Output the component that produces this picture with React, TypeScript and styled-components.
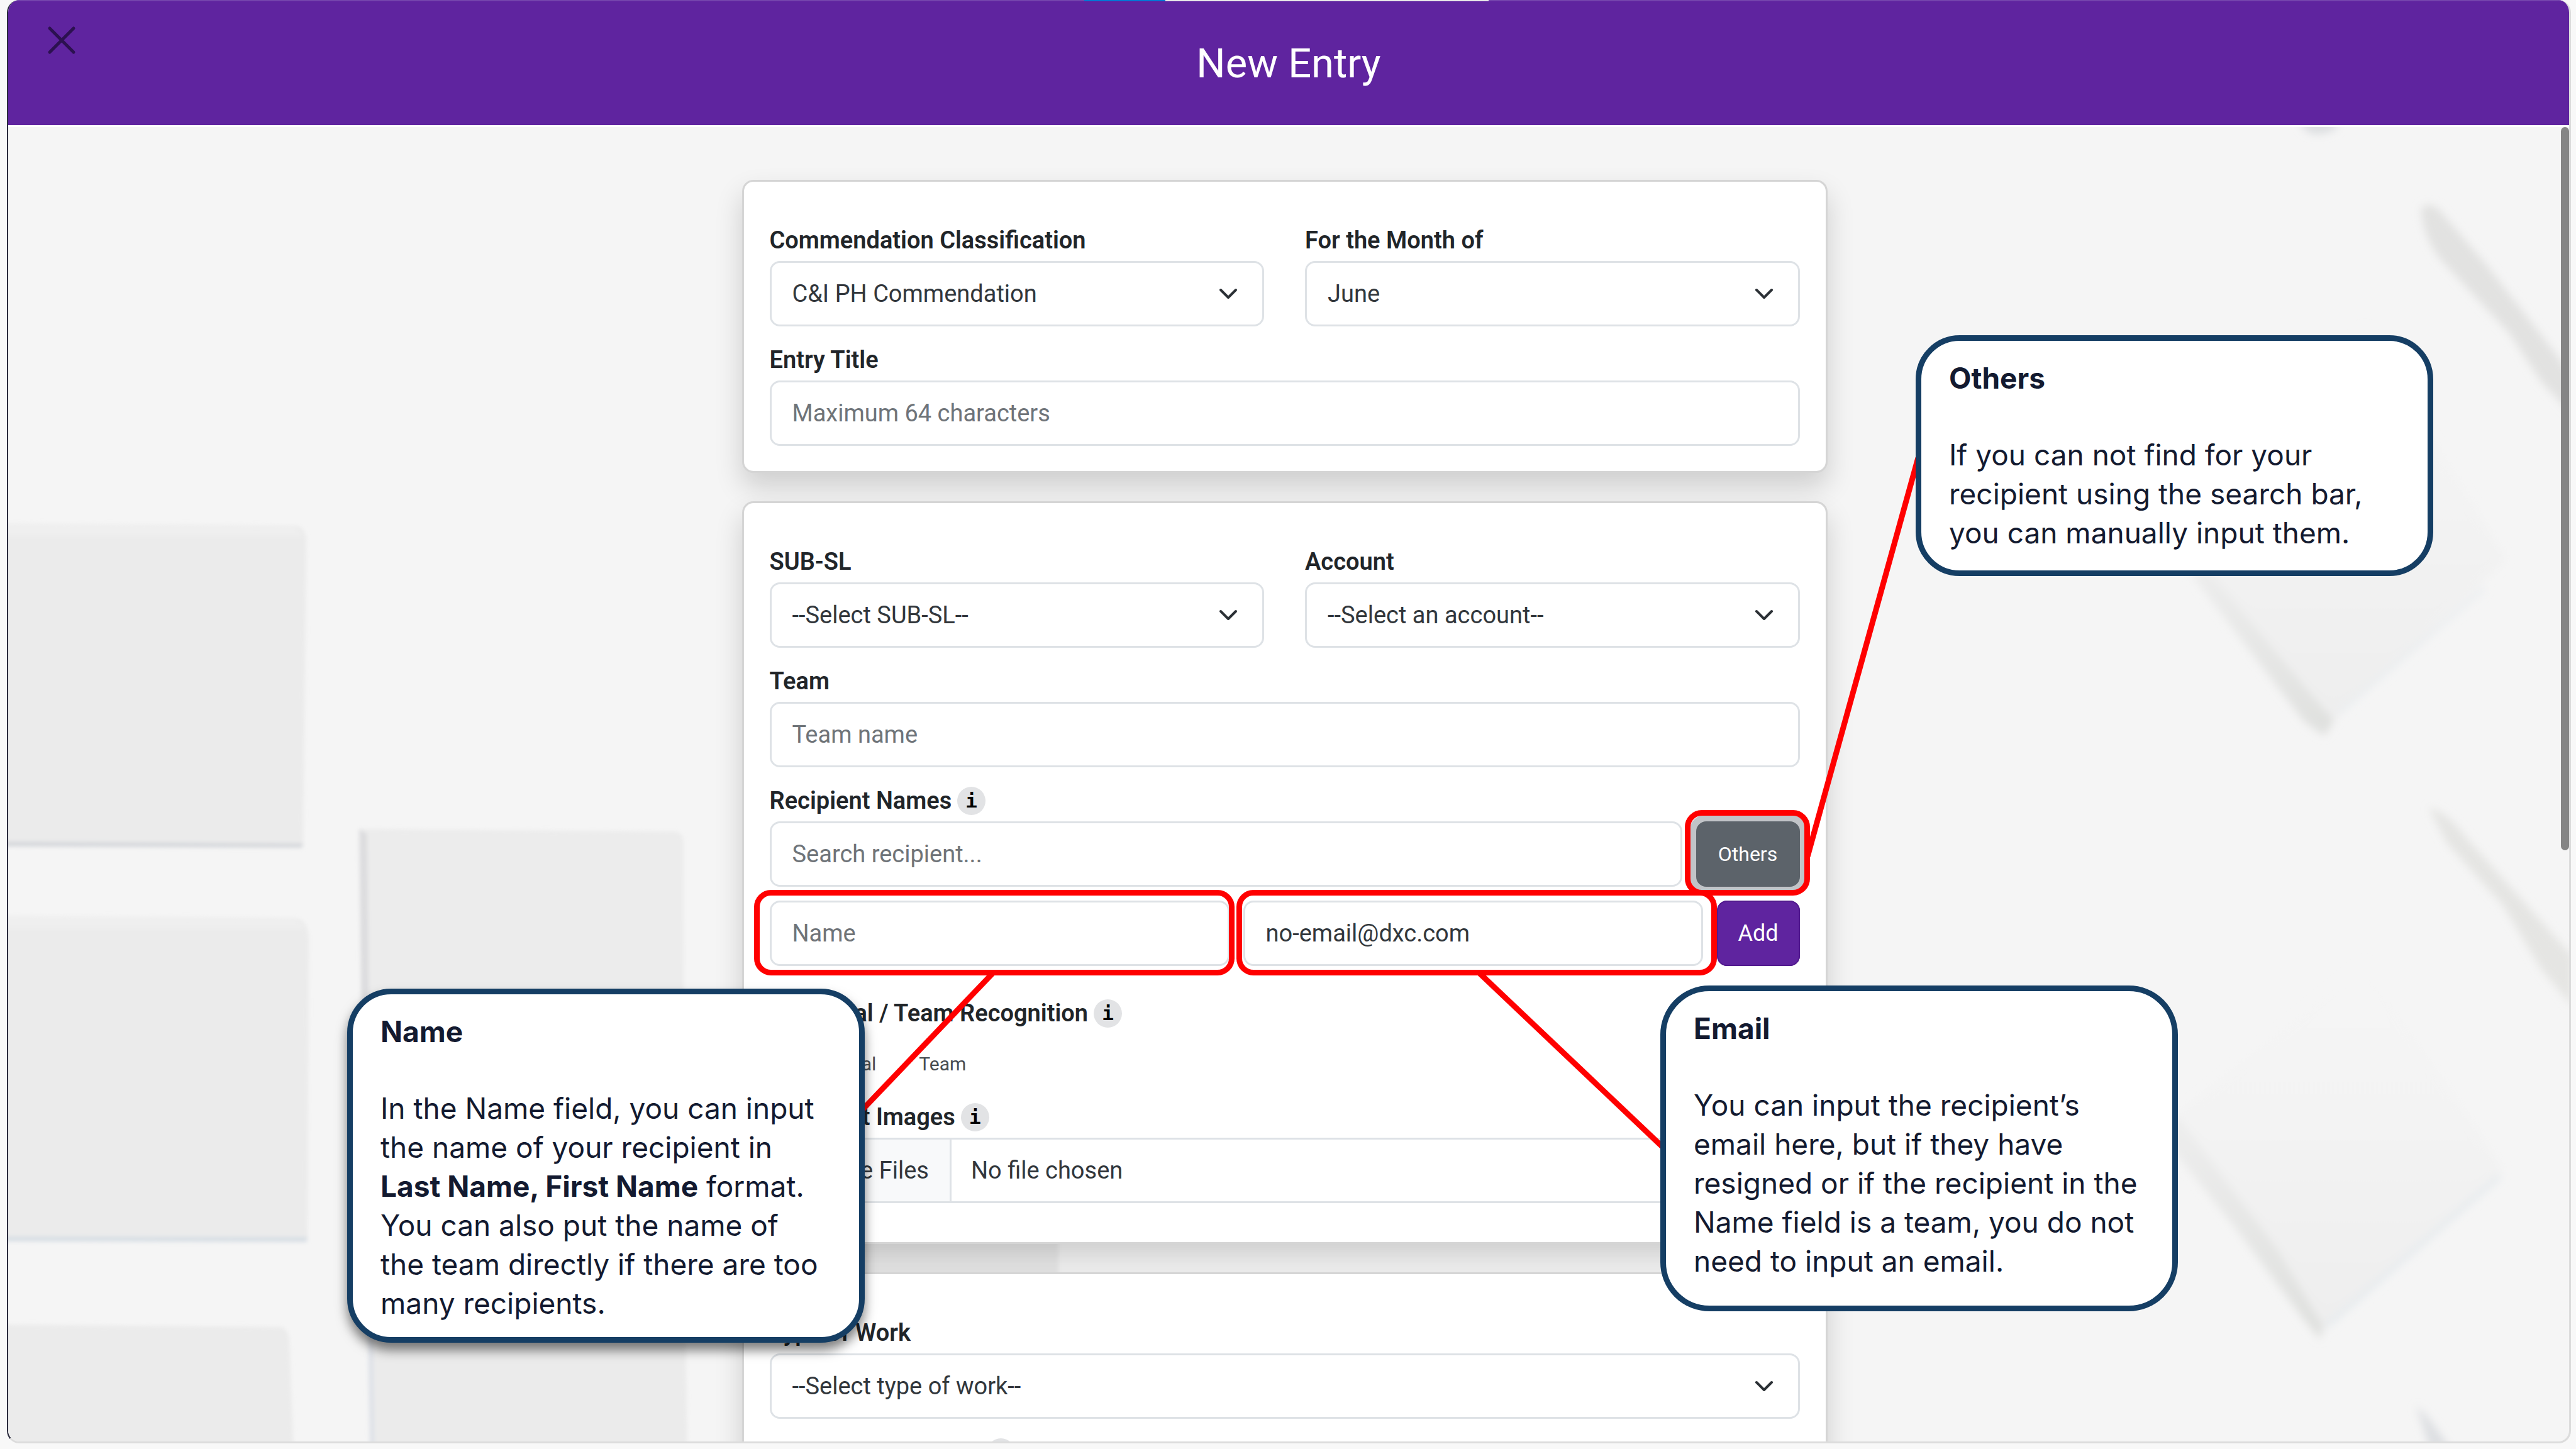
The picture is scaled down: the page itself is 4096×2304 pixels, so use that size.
import React from 'react';
import styled, { createGlobalStyle } from 'styled-components';

const GlobalStyle = createGlobalStyle`
  *, *::before, *::after { box-sizing: border-box; }
  body { margin: 0; background: #f8f8f8; }
  button, input, select { font-family: inherit; margin: 0; }
`;

const formFont = `Roboto, "Liberation Sans", sans-serif`;
const calloutFont = `Inter, "Noto Sans", sans-serif`;

const Stage = styled.div`
  position: relative;
  height: 100vh;
  overflow: hidden;
  display: flex;
  flex-direction: column;
  padding: 0 8px 9px 11px;
  font-family: ${formFont};
  color: #212529;
`;

const Modal = styled.div`
  flex: 1;
  min-height: 0;
  display: flex;
  flex-direction: column;
  border-radius: 20px;
  overflow: hidden;
  background: #f5f5f5;
  border: solid #dcdcdc;
  border-width: 0 3px 3px 2px;
  border-left-color: #2c2c3e;
`;

const Header = styled.header`
  display: grid;
  grid-template-columns: 1fr auto 1fr;
  height: 202px;
  flex: none;
  background: #5f249f;
  border-top: 2px solid #7444ad;
  border-bottom: 3px solid #ffffff;
`;

const Title = styled.h1`
  margin: 0;
  align-self: center;
  font-size: 65px;
  line-height: 76px;
  font-weight: 400;
  color: #ffffff;
`;

const CloseButton = styled.button`
  justify-self: start;
  align-self: start;
  margin: 39px 0 0 62px;
  padding: 0;
  width: 46px;
  height: 46px;
  border: 0;
  background: none;
  color: #2c1150;
  cursor: pointer;
  svg { display: block; width: 100%; height: 100%; }
`;

const TabProgress = styled.div`
  position: absolute;
  top: 0;
  left: 42.1%;
  width: 15.7%;
  height: 2px;
  background: linear-gradient(to right, #0078d4 0 20%, #e8e8e8 20%);
`;

const Body = styled.div`
  position: relative;
  flex: 1;
  min-height: 0;
  display: flex;
`;

const Backdrop = styled.svg`
  position: absolute;
  inset: 0;
  width: 100%;
  height: 100%;
`;

const Scroller = styled.main`
  position: relative;
  flex: 1;
  min-width: 0;
  overflow: hidden;
  padding: 84px 24px 0;
`;

const ScrollTrack = styled.div`
  position: relative;
  flex: none;
  width: 13px;
`;

const ScrollThumb = styled.div`
  height: 55%;
  border-radius: 7px;
  background: #858585;
`;

const Form = styled.form`
  display: flex;
  flex-direction: column;
  gap: 45px;
  width: 100%;
  max-width: 1726px;
  margin: 0 auto;
`;

const Card = styled.section<{ $bottom?: number }>`
  display: flex;
  flex-direction: column;
  gap: 20px;
  padding: 60px 41px ${p => p.$bottom ?? 40}px;
  background: #ffffff;
  border: 3px solid #d5d5d5;
  border-radius: 18px;
  background-clip: padding-box;
  box-shadow: 0 22px 44px rgba(0, 0, 0, 0.16);
`;

const Columns = styled.div`
  display: grid;
  grid-template-columns: 1fr 1fr;
  gap: 65px;
`;

const Field = styled.div`
  display: flex;
  flex-direction: column;
  min-width: 0;
`;

const LabelRow = styled.div`
  display: flex;
  align-items: center;
  gap: 9px;
  height: 66px;
`;

const labelText = `
  font-size: 38px;
  line-height: 66px;
  font-weight: 600;
  white-space: nowrap;
`;

const Label = styled.label`${labelText}`;
const GroupLabel = styled.span`${labelText}`;

const InfoBadge = styled.button`
  display: grid;
  place-items: center;
  width: 45px;
  height: 45px;
  padding: 0;
  border: 0;
  border-radius: 50%;
  background: #e2e3e5;
  color: #000000;
  font-size: 31px;
  font-weight: 700;
  line-height: 45px;
  font-family: "DejaVu Sans Mono", monospace !important;
`;

const BadgeOnlyRow = styled(LabelRow)`
  padding-left: 345px;
`;

const controlBox = `
  width: 100%;
  min-width: 0;
  height: 104px;
  border: 3px solid #dee2e6;
  border-radius: 16px;
  background: #ffffff;
  color: #32373c;
  font-size: 38px;
  line-height: 60px;
  outline: none;
`;

const Input = styled.input`
  ${controlBox}
  padding: 0 33px;
  &::placeholder { color: #6f7479; opacity: 1; }
`;

const SelectWrap = styled.div`
  display: grid;
  align-items: center;
  > * { grid-area: 1 / 1; }
  svg {
    justify-self: end;
    margin-right: 42px;
    width: 30px;
    height: 18px;
    pointer-events: none;
    color: #2b3035;
  }
`;

const Select = styled.select`
  ${controlBox}
  appearance: none;
  padding: 0 90px 0 33px;
`;

const FileInput = styled.input`
  ${controlBox}
  padding: 0;
  overflow: hidden;
  line-height: 98px;
  &::file-selector-button {
    height: 98px;
    margin: 0 31px 0 0;
    padding: 0 33px;
    min-width: 278px;
    text-align: right;
    border: 0;
    border-right: 3px solid #dee2e6;
    background: #f8f9fa;
    color: #32373c;
    font: inherit;
    line-height: 98px;
  }
`;

const InlineRow = styled.div<{ $top?: number }>`
  display: flex;
  gap: 22px;
  margin-top: ${p => p.$top ?? 0}px;
`;

const SolidButton = styled.button<{ $tone: string; $width: number; $size: number; $ring?: boolean }>`
  flex: none;
  width: ${p => p.$width}px;
  height: 104px;
  padding: 0;
  border: 0;
  border-radius: 16px;
  background: ${p => p.$tone};
  color: #ffffff;
  font-size: ${p => p.$size}px;
  box-shadow: ${p => (p.$ring ? '0 0 0 11px #c1c4c8' : 'inset 0 0 0 2px #521a8e')};
`;

const RadioRow = styled.div`
  display: flex;
  gap: 68px;
  align-items: center;
  height: 62px;
  padding-left: 42px;
`;

const RadioLabel = styled.label`
  font-size: 30px;
  line-height: 62px;
  color: #484d52;
`;

const HiddenRadio = styled.input`
  position: absolute;
  opacity: 0;
  width: 1px;
  height: 1px;
`;

const Overlay = styled.div`
  position: absolute;
  inset: 0;
  pointer-events: none;
`;

const Connectors = styled.svg`
  position: absolute;
  inset: 0;
  width: 100%;
  height: 100%;
`;

const Marker = styled.div<{ $x: number; $y: number; $w: number; $h: number }>`
  position: absolute;
  left: ${p => p.$x}px;
  top: ${p => p.$y}px;
  width: ${p => p.$w}px;
  height: ${p => p.$h}px;
  border: 9px solid #ff0000;
  border-radius: 27px;
`;

const Callout = styled.aside<{ $x: number; $y: number; $w: number; $h: number; $r?: number; $shadow?: boolean }>`
  position: absolute;
  left: ${p => p.$x}px;
  top: ${p => p.$y}px;
  width: ${p => p.$w}px;
  height: ${p => p.$h}px;
  padding: 28px 20px 0 44px;
  border: 9px solid #153e64;
  border-radius: ${p => p.$r ?? 70}px;
  background: #ffffff;
  box-shadow: ${p => (p.$shadow ? '0 12px 18px rgba(0, 0, 0, 0.5)' : 'none')};
  color: #131a30;
  font-family: ${calloutFont};
  font-size: 46px;
  line-height: 62px;
  white-space: nowrap;
`;

const CalloutTitle = styled.h2`
  margin: 0 0 60px;
  font-size: 46px;
  line-height: 62px;
  font-weight: 700;
`;

const CalloutText = styled.p`
  margin: 0;
`;

const Chevron = () => (
  <svg viewBox="0 0 30 18" fill="none" stroke="currentColor" strokeWidth="4" strokeLinecap="round" strokeLinejoin="round" aria-hidden="true">
    <path d="M3 3l12 12L27 3" />
  </svg>
);

function SelectField({ id, label, value }: { id: string; label: string; value: string }) {
  return (
    <Field>
      <LabelRow><Label htmlFor={id}>{label}</Label></LabelRow>
      <SelectWrap>
        <Select id={id} defaultValue={value}><option>{value}</option></Select>
        <Chevron />
      </SelectWrap>
    </Field>
  );
}

const Info = () => <InfoBadge type="button">i</InfoBadge>;

const Lines = ({ items }: { items: React.ReactNode[] }) => (
  <CalloutText>
    {items.map((line, i) => <React.Fragment key={i}>{i > 0 && <br />}{line}</React.Fragment>)}
  </CalloutText>
);

function PaperTiles() {
  return (
    <Backdrop viewBox="13 202 4072 2090" preserveAspectRatio="none" aria-hidden="true">
      <defs>
        <filter id="soft" x="-5%" y="-5%" width="110%" height="110%"><feGaussianBlur stdDeviation="3" /></filter>
        <filter id="softer" x="-20%" y="-20%" width="140%" height="140%"><feGaussianBlur stdDeviation="7" /></filter>
        <linearGradient id="diamond" x1="0" y1="0" x2="0" y2="1">
          <stop offset="0" stopColor="#f5f5f5" />
          <stop offset="0.45" stopColor="#f3f3f3" />
          <stop offset="1" stopColor="#eeeeee" />
        </linearGradient>
        <linearGradient id="edge" x1="0" y1="0" x2="1" y2="1">
          <stop offset="0" stopColor="#eeeeee" />
          <stop offset="1" stopColor="#dfe0de" />
        </linearGradient>
      </defs>
      <g filter="url(#soft)">
        <path d="M0 832L470 836Q486 838 487 860L482 1346H0Z" fill="#ebebeb" />
        <path d="M0 832L470 838L482 852H0Z" fill="#efefef" />
        <path d="M0 1338L482 1341L480 1348L0 1346Z" fill="#d6d8dc" />
        <path d="M0 1456L470 1460Q488 1462 491 1490L489 1974H0Z" fill="#ebebeb" />
        <path d="M0 1456L470 1462L486 1476H0Z" fill="#efefef" />
        <path d="M0 1966L489 1967L487 1975L0 1974Z" fill="#d8dfe5" />
        <path d="M0 2106L446 2110Q458 2112 460 2130L467 2310H0Z" fill="#ebebeb" />
        <path d="M571 1318L1074 1322Q1086 1324 1087 1340L1088 1900L580 1900Z" fill="#ececec" />
        <path d="M571 1318L584 1326L590 1900L578 1900Z" fill="#dddddf" />
        <path d="M588 2000H1088L1093 2310H588Z" fill="#ebebeb" />
        <path d="M583 2000H592L596 2310H588Z" fill="#dfe2e8" />
        <path d="M1250 1840H1683V2210H1250Z" fill="#e9e9e9" />
      </g>
      <g filter="url(#softer)">
        <path d="M3440 860L3760 520L3985 890L3695 1160Z" fill="url(#diamond)" />
        <path d="M3470 895L3510 905L3680 1110L3712 1146L3696 1170L3664 1148Z" fill="url(#edge)" />
        <path d="M3720 1132L3950 935" stroke="#e8ecef" strokeWidth="6" />
        <path d="M3440 1790L3760 1530L3980 1860L3690 2120Z" fill="url(#diamond)" />
        <path d="M3440 1760L3465 1780L3620 1984L3694 2108L3690 2130L3664 2100L3560 1960L3440 1810Z" fill="url(#edge)" />
        <path d="M3700 2108L3975 1870" stroke="#e3e9ed" strokeWidth="7" />
        <path d="M3850 330Q3868 318 3884 340L3956 424L4062 560L4090 600V660L4040 606L3990 530L3880 412Q3850 372 3850 330Z" fill="#e2e2e1" />
        <path d="M3862 1284Q3890 1290 3920 1330L4090 1520V1600L4040 1540L3980 1440L3890 1340Z" fill="#e5e5e3" />
        <path d="M3842 2236Q3862 2250 3900 2310H3866Z" fill="#dddfe2" />
        <path d="M3655 190Q3670 228 3716 204V190Z" fill="#dcdee0" />
      </g>
    </Backdrop>
  );
}

export default function App() {
  return (
    <Stage>
      <GlobalStyle />
      <Modal role="dialog" aria-labelledby="dialog-title">
        <Header>
          <CloseButton type="button" aria-label="Close">
            <svg viewBox="0 0 46 46" stroke="currentColor" strokeWidth="5" strokeLinecap="round"><path d="M4 4l38 38M42 4L4 42" /></svg>
          </CloseButton>
          <Title id="dialog-title">New Entry</Title>
        </Header>
        <Body>
          <PaperTiles />
          <Scroller>
            <Form onSubmit={e => e.preventDefault()}>
              <Card>
                <Columns>
                  <SelectField id="classification" label="Commendation Classification" value="C&I PH Commendation" />
                  <SelectField id="month" label="For the Month of" value="June" />
                </Columns>
                <Field>
                  <LabelRow><Label htmlFor="title">Entry Title</Label></LabelRow>
                  <Input id="title" maxLength={64} placeholder="Maximum 64 characters" />
                </Field>
              </Card>

              <Card $bottom={62}>
                <Columns>
                  <SelectField id="subsl" label="SUB-SL" value="--Select SUB-SL--" />
                  <SelectField id="account" label="Account" value="--Select an account--" />
                </Columns>
                <Field>
                  <LabelRow><Label htmlFor="team">Team</Label></LabelRow>
                  <Input id="team" placeholder="Team name" />
                </Field>
                <Field>
                  <LabelRow><Label htmlFor="recipient">Recipient Names</Label><Info /></LabelRow>
                  <InlineRow>
                    <Input id="recipient" placeholder="Search recipient..." />
                    <SolidButton type="button" $tone="#5c636a" $width={165} $size={32} $ring>Others</SolidButton>
                  </InlineRow>
                  <InlineRow $top={22}>
                    <Input aria-label="Name" placeholder="Name" />
                    <Input aria-label="Email" type="email" defaultValue="no-email@dxc.com" />
                    <SolidButton type="button" $tone="#5f249f" $width={132} $size={36}>Add</SolidButton>
                  </InlineRow>
                </Field>
                <Field>
                  <InlineRow $top={22}>
                    <LabelRow><GroupLabel>Individual / Team Recognition</GroupLabel><Info /></LabelRow>
                  </InlineRow>
                  <InlineRow $top={17}>
                    <RadioRow role="radiogroup" aria-label="Individual / Team Recognition">
                      <RadioLabel><HiddenRadio type="radio" name="kind" />Individual</RadioLabel>
                      <RadioLabel><HiddenRadio type="radio" name="kind" />Team</RadioLabel>
                    </RadioRow>
                  </InlineRow>
                </Field>
                <Field>
                  <LabelRow><Label htmlFor="images">Recipient Images</Label><Info /></LabelRow>
                  <FileInput id="images" type="file" multiple />
                </Field>
              </Card>

              <Card>
                <SelectField id="work" label="Type of Work" value="--Select type of work--" />
                <BadgeOnlyRow><InfoBadge type="button" aria-label="More information" /></BadgeOnlyRow>
              </Card>
            </Form>
          </Scroller>
          <ScrollTrack><ScrollThumb /></ScrollTrack>
        </Body>
      </Modal>
      <TabProgress />

      <Overlay>
        <Connectors viewBox="0 0 4096 2304" fill="none" stroke="#ff0000" strokeWidth="9" aria-hidden="true">
          <path d="M1579 1547L1368 1768" />
          <path d="M2352 1547L2646 1826" />
          <path d="M3050 728L2874 1362" />
        </Connectors>
        <Marker $x={2679} $y={1288} $w={199} $h={136} />
        <Marker $x={1199} $y={1415} $w={764} $h={136} />
        <Marker $x={1966} $y={1415} $w={764} $h={136} />
        <Callout $x={3046} $y={533} $w={823} $h={383}>
          <CalloutTitle>Others</CalloutTitle>
          <Lines items={['If you can not find for your', 'recipient using the search bar,', 'you can manually input them.']} />
        </Callout>
        <Callout $x={2640} $y={1567} $w={823} $h={518} $r={78}>
          <CalloutTitle>Email</CalloutTitle>
          <Lines items={['You can input the recipient’s', 'email here, but if they have', 'resigned or if the recipient in the', 'Name field is a team, you do not', 'need to input an email.']} />
        </Callout>
        <Callout $x={552} $y={1572} $w={823} $h={563} $shadow>
          <CalloutTitle>Name</CalloutTitle>
          <Lines
            items={[
              'In the Name field, you can input',
              'the name of your recipient in',
              <><strong>Last Name, First Name</strong> format.</>,
              'You can also put the name of',
              'the team directly if there are too',
              'many recipients.',
            ]}
          />
        </Callout>
      </Overlay>
    </Stage>
  );
}
